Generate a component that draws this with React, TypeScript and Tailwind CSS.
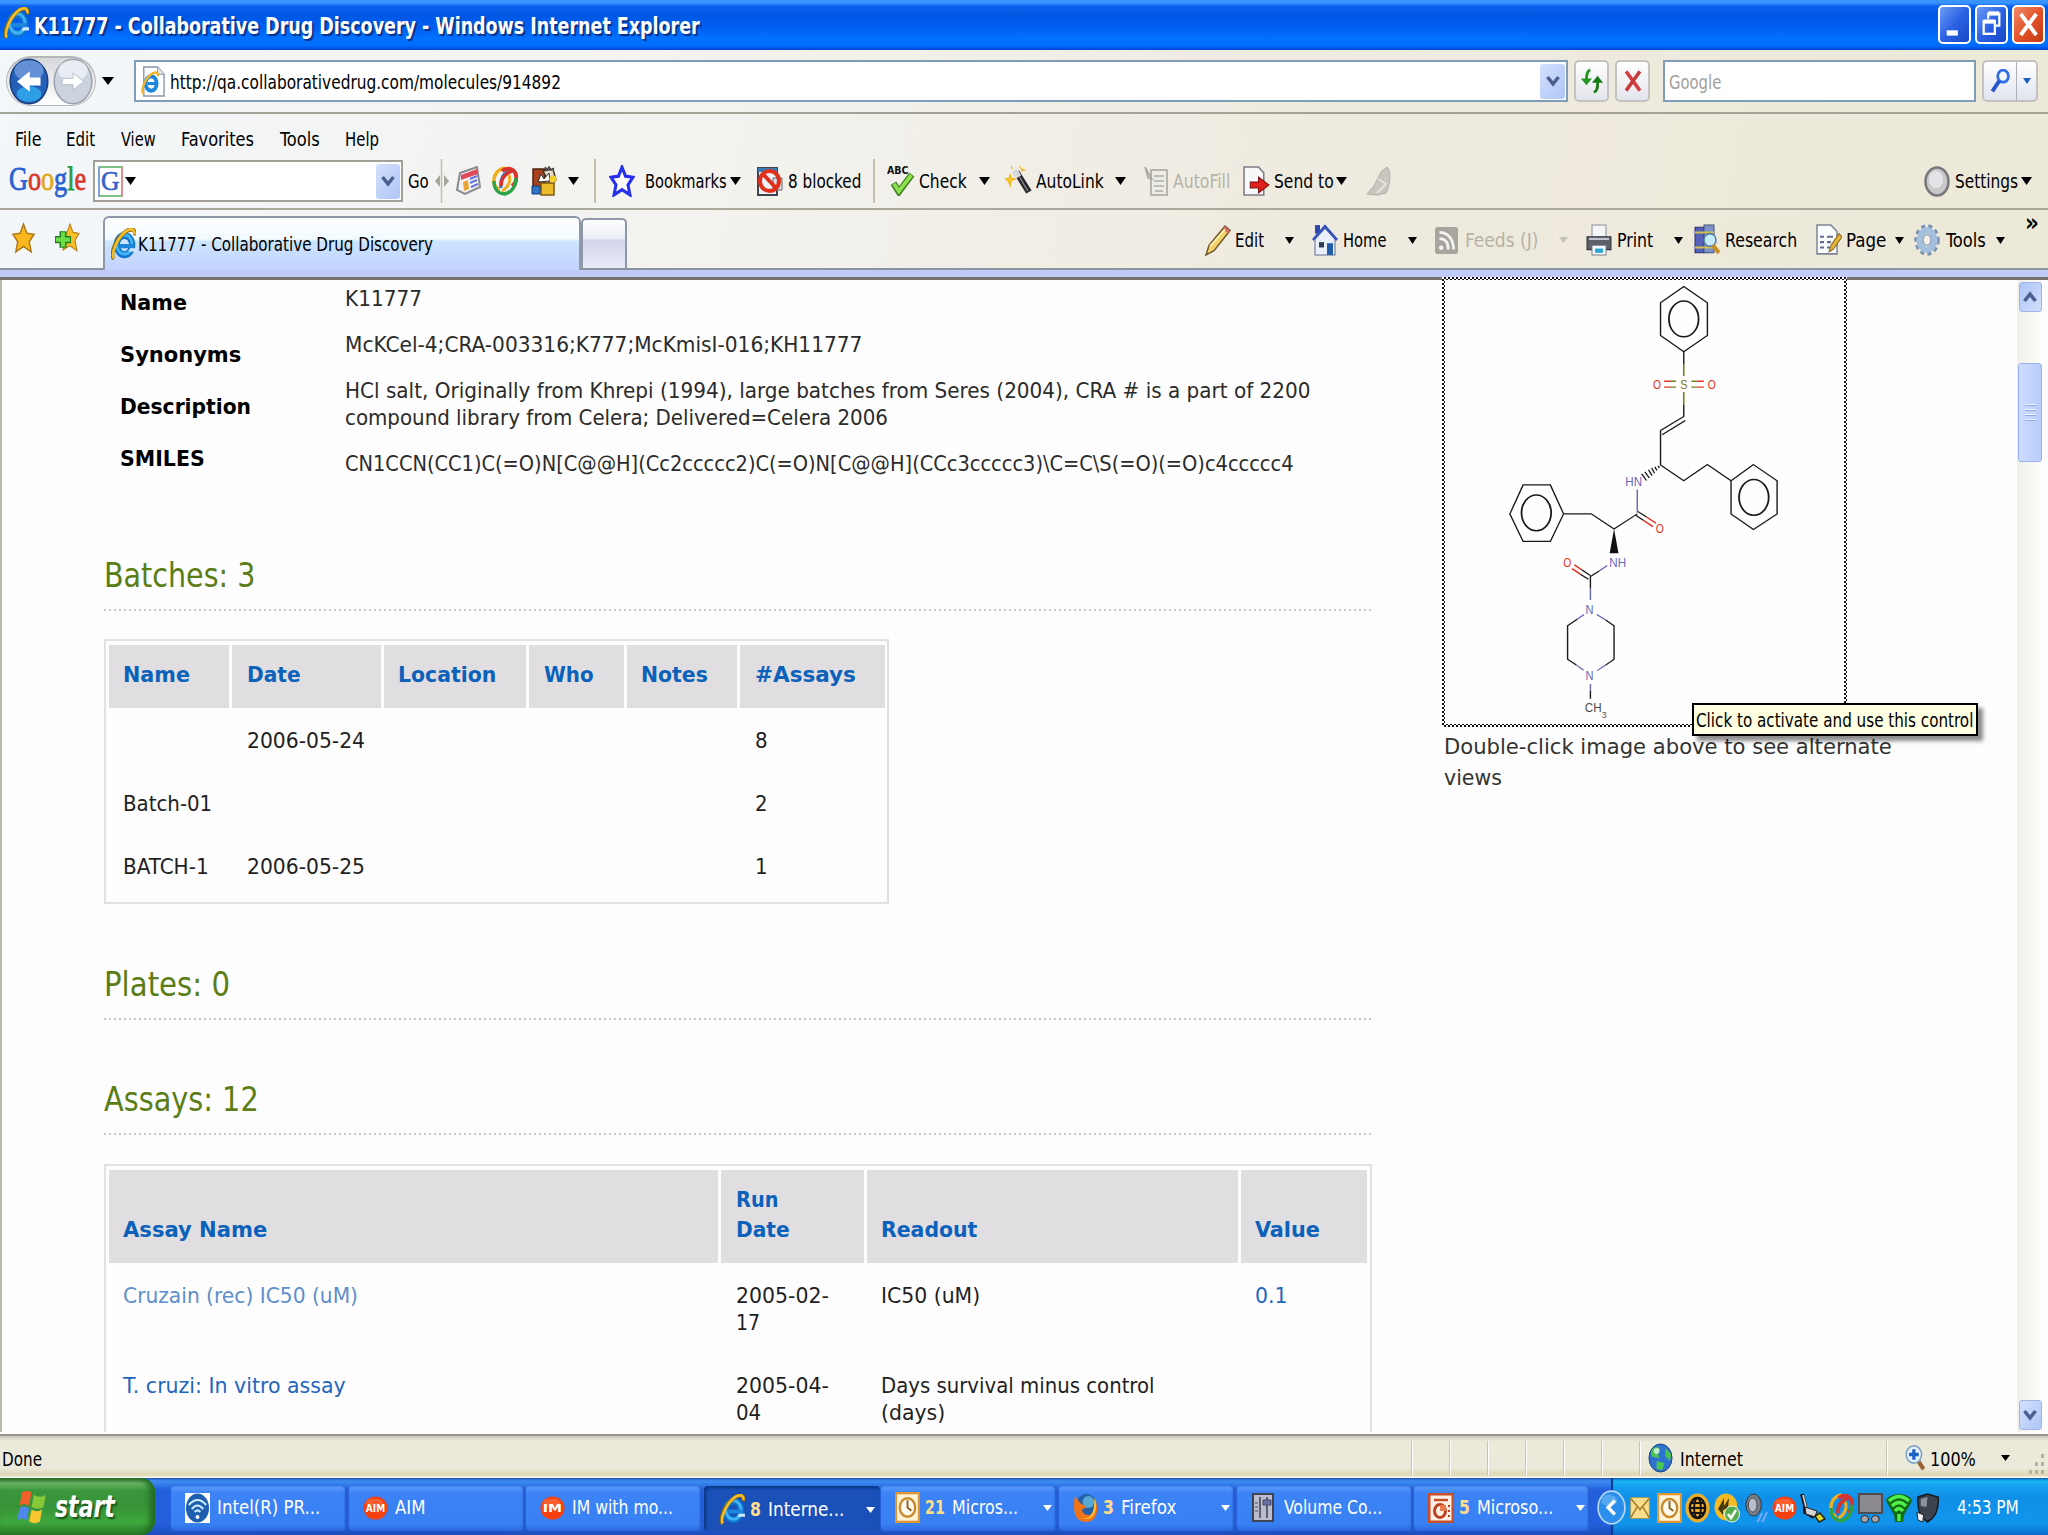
import React, { useLayoutEffect, useRef, useState } from 'react';

type Box = { className?: string; children?: React.ReactNode };

// Text squeezed horizontally so that it fills the width of its box.
const Fit: React.FC<Box> = ({ className = '', children }) => {
  const outer = useRef<HTMLSpanElement>(null);
  const inner = useRef<HTMLSpanElement>(null);
  const [scale, setScale] = useState(1);

  useLayoutEffect(() => {
    if (outer.current && inner.current) {
      setScale(outer.current.clientWidth / inner.current.offsetWidth);
    }
  }, [children]);

  return (
    <span ref={outer} className={`block shrink-0 whitespace-nowrap leading-none ${className}`}>
      <span ref={inner} className="inline-block origin-left" style={{ transform: `scaleX(${scale})` }}>
        {children}
      </span>
    </span>
  );
};

const Icon: React.FC<Box> = ({ className = 'h-[30px] w-[26px]', children }) => (
  <svg viewBox="0 0 26 30" preserveAspectRatio="none" fill="none" className={`block shrink-0 ${className}`}>
    {children}
  </svg>
);

const Caret: React.FC<Box> = ({ className = '' }) => (
  <svg viewBox="0 0 12 8" preserveAspectRatio="none" className={`block h-2 w-3 shrink-0 fill-current ${className}`}>
    <path d="M0 0H12L6 8Z" />
  </svg>
);

const IeLogo: React.FC<Box> = ({ className }) => (
  <Icon className={className}>
    <ellipse cx="14" cy="16" rx="8" ry="9" stroke="#1173c9" strokeWidth="6.500" />
    <ellipse cx="14" cy="15.500" rx="8" ry="9" stroke="#3fb3f3" strokeWidth="3" />
    <path d="M9 17H24" stroke="#1e86dc" strokeWidth="4" />
    <path d="M20 19H26V22H18Z" fill="#cfe6fa" />
    <path d="M3 29C-1 25 4 12 13 5C19 0 26 0 25 7" stroke="#8a6a12" strokeWidth="4" />
    <path d="M3 28.500C0 25 5 12 13 5C19 0 25 0 24.500 6" stroke="#f5bf2c" strokeWidth="2.600" />
  </Icon>
);

const PageIcon = () => (
  <Icon className="h-[31px] w-[24px]">
    <path d="M3 1H18L25 8V29H3Z" fill="#fff" stroke="#8a94a6" strokeWidth="1.500" />
    <path d="M18 1V8H25" fill="#dfe6f0" stroke="#8a94a6" />
    <ellipse cx="11" cy="17" rx="6" ry="7" stroke="#1c86dd" strokeWidth="4" />
    <path d="M7 17H18" stroke="#1c86dd" strokeWidth="3" />
    <path d="M3 27C-1 24 4 13 11 8C16 5 19 6 18 10" stroke="#f0b52a" strokeWidth="2.500" />
  </Icon>
);

const Star: React.FC<{ fill: string; stroke: string; className?: string; width?: number }> = ({ fill, stroke, className, width = 1.5 }) => (
  <Icon className={className}>
    <path d="M13 2L16.500 10.500L24 11.500L19 18.500L21 28L13 23L5 28L7 18.500L2 11.500L9.500 10.500Z" fill={fill} stroke={stroke} strokeWidth={width} />
  </Icon>
);

const Swirl: React.FC<Box> = ({ className }) => (
  <Icon className={className}>
    <path d="M13 2C5 3 1 10 2 17C3 21 5 23 8 23" stroke="#f0b01e" strokeWidth="3.500" />
    <path d="M19 5C11 6 8 13 9 22" stroke="#2c70c8" strokeWidth="3" />
    <path d="M10 5C15 1 22 2 24 9C25 14 23 18 20 20" stroke="#d8332a" strokeWidth="4" />
    <path d="M20 5C12 8 9 13 9 20" stroke="#d8332a" strokeWidth="3.500" />
    <path d="M17 9C19 14 17 21 10 25" stroke="#f0b01e" strokeWidth="3" />
    <path d="M24 12C24 21 19 27 12 28" stroke="#2ba345" strokeWidth="3.500" />
    <path d="M2 15C2 23 6 28 13 28" stroke="#2ba345" strokeWidth="3.500" />
  </Icon>
);

const Clock: React.FC<Box> = ({ className }) => (
  <Icon className={className}>
    <rect x="1" y="1" width="24" height="28" fill="#fff3d6" stroke="#e0952f" strokeWidth="2.500" />
    <ellipse cx="13" cy="15" rx="8" ry="9" fill="#fffaf0" stroke="#c98a2c" strokeWidth="2.500" />
    <path d="M13 8V15L17 18" stroke="#8c6420" strokeWidth="2" />
  </Icon>
);

const Badge: React.FC<{ label: string; className?: string }> = ({ label, className }) => (
  <Icon className={className}>
    <ellipse cx="13" cy="15" rx="12.500" ry="14.500" fill="#f8400e" />
    <ellipse cx="12" cy="9" rx="9" ry="6" fill="#ff7446" opacity=".6" />
    <text x="3" y="20" textLength="20" lengthAdjust="spacingAndGlyphs" fontSize="12" fontWeight="bold" fill="#fff">{label}</text>
  </Icon>
);

const Chevron: React.FC<Box> = ({ className = '' }) => (
  <div className={`flex shrink-0 items-center justify-center rounded-[3px] bg-linear-to-br from-[#d3e0fe] to-[#aec5f6] ${className}`}>
    <svg viewBox="0 0 14 12" className="block h-3 w-[14px]" fill="none">
      <path d="M1.500 2L7 9L12.500 2" stroke="#4a6190" strokeWidth="3.500" />
    </svg>
  </div>
);

const TitleBar = () => (
  <header className="flex h-[50px] items-center bg-[linear-gradient(#3a94ff_0,#3a94ff_3px,#0a63ee_6px,#0057e2_14px,#005ff2_28px,#0072ff_38px,#006cfb_46px,#0042cf_50px)] text-white">
    <IeLogo className="ml-[4px] h-[32px] w-[25px] -mt-1" />
    <Fit className="ml-[5px] w-[666px] pt-[2px] text-[23px] font-bold [text-shadow:2px_2px_1px_#0a2f86]">K11777 - Collaborative Drug Discovery - Windows Internet Explorer</Fit>
    <div className="mr-[3px] ml-auto flex gap-[4px] -mt-[2px]">
      {['min', 'restore', 'close'].map((kind) => (
        <div
          key={kind}
          className={`h-[39px] w-[33px] rounded-[5px] border-2 border-white ${
            kind === 'close'
              ? 'bg-linear-to-br from-[#f08a66] via-[#e4532a] to-[#c23a10]'
              : 'bg-linear-to-br from-[#6d9bf6] via-[#2b62e4] to-[#1747c4]'
          }`}
        >
          <Icon className="h-full w-full">
            {kind === 'min' && <rect x="6" y="20" width="10" height="4.500" fill="#fff" />}
            {kind === 'restore' && (
              <g stroke="#fff" strokeWidth="2">
                <path d="M10 10V6H20V16H17" />
                <path d="M10 5.500H20" strokeWidth="3.500" />
                <rect x="6" y="12" width="10" height="11" />
                <path d="M6 12.500H16" strokeWidth="3.500" />
              </g>
            )}
            {kind === 'close' && <path d="M6 6L20 24M20 6L6 24" stroke="#fff" strokeWidth="3.500" />}
          </Icon>
        </div>
      ))}
    </div>
  </header>
);

const AddressBar = () => (
  <div className="flex h-[64px] items-center border-b-2 border-[#a3a296]">
    <div className="ml-[6px] flex h-[50px] w-[90px] items-center justify-between rounded-full border border-[#b5b7ba] border-t-2 bg-linear-to-b from-[#d6d8da] to-white px-[2px]">
      <Icon className="h-[47px] w-[40px]">
        <ellipse cx="13" cy="15" rx="12.200" ry="14.200" fill="#2560b8" stroke="#1b3d7c" />
        <ellipse cx="13" cy="8" rx="9.500" ry="6.500" fill="#7fa5e2" opacity=".7" />
        <ellipse cx="13" cy="23" rx="8" ry="5" fill="#31b4f4" opacity=".75" />
        <path d="M6 15L13 9.500V13H20V17H13V20.500Z" fill="#fff" stroke="#fff" />
      </Icon>
      <Icon className="h-[47px] w-[40px]">
        <ellipse cx="13" cy="15" rx="12.200" ry="14.200" fill="#cbd4de" stroke="#9ba3ac" />
        <ellipse cx="13" cy="8" rx="9.500" ry="6.500" fill="#eef2f6" opacity=".8" />
        <path d="M20 15L13 9.500V13H6V17H13V20.500Z" fill="#fff" stroke="#b4bcc6" strokeWidth=".6" />
      </Icon>
    </div>
    <Caret className="ml-[6px]" />
    <div className="ml-[20px] flex h-[42px] w-[1434px] items-center border-2 border-[#7f9db9] bg-white pl-[5px]">
      <PageIcon />
      <Fit className="ml-[5px] w-[391px] pt-[2px] text-[19px]">http://qa.collaborativedrug.com/molecules/914892</Fit>
      <Chevron className="mr-px ml-auto h-[35px] w-[25px]" />
    </div>
    <div className="ml-[6px] flex h-[42px] w-[35px] items-center justify-center rounded-[5px] border-2 border-[#c3c2c0] bg-linear-to-b from-white to-[#e4e4ec]">
      <Icon className="h-[26px] w-[24px]">
        <path d="M11 2C7 4 7 9 7 14" stroke="#23961f" strokeWidth="3" />
        <path d="M1 12H13L7 20Z" fill="#23961f" />
        <path d="M15 28C20 26 19 20 19 15" stroke="#187a16" strokeWidth="3" />
        <path d="M13 17H25L19 9Z" fill="#187a16" />
      </Icon>
    </div>
    <div className="ml-[6px] flex h-[42px] w-[35px] items-center justify-center rounded-[5px] border-2 border-[#c3c2c0] bg-linear-to-b from-white to-[#e4e4ec]">
      <Icon className="h-[22px] w-[18px]">
        <path d="M3 2L23 28" stroke="#d13f42" strokeWidth="5" />
        <path d="M23 2L3 28" stroke="#c53a3c" strokeWidth="5" />
      </Icon>
    </div>
    <div className="ml-[13px] flex h-[42px] w-[313px] items-center border-2 border-[#7f9db9] bg-white pl-[4px]">
      <Fit className="w-[52px] pt-[2px] text-[19px] text-[#a3a09a]">Google</Fit>
    </div>
    <div className="ml-[6px] flex h-[42px] w-[56px] items-center rounded-[5px] border-2 border-[#c3c2c0] bg-linear-to-b from-white to-[#e1e4f0]">
      <div className="flex h-full w-[33px] items-center justify-center border-r border-[#b0b0b4]">
        <Icon className="h-[24px] w-[20px]">
          <ellipse cx="17" cy="9" rx="7" ry="7.500" stroke="#2d6be8" strokeWidth="3.500" />
          <path d="M12 15L3 28" stroke="#2358cf" strokeWidth="5" />
        </Icon>
      </div>
      <Caret className="ml-[6px] h-[6px] w-[8px] text-[#1a5fc4]" />
    </div>
  </div>
);

const MenuBar = () => (
  <nav className="flex h-[50px] items-center pl-[15px] text-[19px]">
    <Fit className="w-[26px]">File</Fit>
    <Fit className="ml-[25px] w-[29px]">Edit</Fit>
    <Fit className="ml-[26px] w-[35px]">View</Fit>
    <Fit className="ml-[25px] w-[73px]">Favorites</Fit>
    <Fit className="ml-[26px] w-[40px]">Tools</Fit>
    <Fit className="ml-[25px] w-[34px]">Help</Fit>
  </nav>
);

const GoogleBar = () => (
  <div className="flex h-[46px] items-center border-b-2 border-[#a9a89b] pb-[10px] text-[19px]">
    <Fit className="ml-[9px] w-[77px] font-['Liberation_Serif',serif] text-[33px] -mt-[4px] [-webkit-text-stroke:0.8px]">
      <span className="text-[#2a62d0]">G</span>
      <span className="text-[#d8392a]">o</span>
      <span className="text-[#e0a91c]">o</span>
      <span className="text-[#2a62d0]">g</span>
      <span className="text-[#2f9a3d]">l</span>
      <span className="text-[#d8392a]">e</span>
    </Fit>
    <div className="ml-[7px] flex h-[42px] w-[310px] shrink-0 items-center border-2 border-[#a19f98] bg-white pl-[3px]">
      <div className="flex h-[31px] w-[25px] items-center justify-center border-2 border-t-[#7fc088] border-r-[#e58a86] border-b-[#7fc088] border-l-[#7fa0e0] font-['Liberation_Serif',serif] text-[27px] leading-none text-[#3562c8] [-webkit-text-stroke:0.6px]">
        <Fit className="w-[19px]">G</Fit>
      </div>
      <Caret className="ml-[2px] h-[8px] w-[11px]" />
      <Chevron className="mr-px ml-auto h-[35px] w-[24px]" />
    </div>
    <Fit className="ml-[5px] w-[21px]">Go</Fit>
    <svg viewBox="0 0 14 44" className="ml-[6px] block h-[44px] w-[14px] shrink-0">
      <path d="M0 22L5 16V28ZM14 22L9 16V28Z" fill="#a5a59c" />
      <path d="M6.500 0V44" stroke="#c0bfae" strokeWidth="1.500" />
    </svg>
    <Icon className="ml-[6px] h-[30px] w-[26px]">
      <path d="M5 7L22 1L25 21L10 28L2 24Z" fill="#f3f3f6" stroke="#8a8a92" strokeWidth="2" />
      <path d="M6 9L22 3L23 8L6 14Z" fill="#e04a58" />
      <path d="M8 16L13 14L14 23L9 25Z" fill="#e9a533" />
      <path d="M15 13L22 10M15 17L22 14M16 21L23 18" stroke="#6672dd" strokeWidth="2" />
    </Icon>
    <Swirl className="ml-[11px] h-[30px] w-[26px]" />
    <Icon className="ml-[13px] h-[30px] w-[26px]">
      <path d="M2 3H14V22H2Z" fill="#a8411d" stroke="#4a2515" strokeWidth="1.500" />
      <path d="M12 5L22 3L25 14L20 20Z" fill="#e5d9c8" stroke="#3b352c" strokeWidth="1.500" />
      <path d="M7 16L10 8L13 13L18 7L19 15Z" fill="#fff" stroke="#333" />
      <path d="M14 1L16 4L18 1L20 4L23 2" stroke="#444" strokeWidth="1.500" />
      <rect x="10" y="17" width="13" height="12" fill="#eebb2d" stroke="#7a5a12" strokeWidth="1.500" />
      <path d="M1 20H9V28H1Z" fill="#2f74c9" stroke="#173f74" />
      <circle cx="22" cy="13" r="3.500" fill="#f4cf2f" />
    </Icon>
    <Caret className="ml-[11px] h-[8px] w-[11px]" />
    <div className="ml-[15px] h-[44px] w-[2px] shrink-0 bg-[#c3c1ac]" />
    <Star className="ml-[13px] h-[32px] w-[26px]" fill="#fdfdff" stroke="#2430ee" width={3} />
    <Fit className="ml-[10px] w-[82px]">Bookmarks</Fit>
    <Caret className="ml-[3px] h-[8px] w-[11px]" />
    <Icon className="ml-[16px] h-[30px] w-[26px]">
      <path d="M1 2H20V29H1Z" fill="#eef2f6" stroke="#3b4650" strokeWidth="2" />
      <path d="M1 2H20V6H1Z" fill="#3b7bb5" />
      <path d="M16 12H25V24H16Z" fill="#d9e0e8" stroke="#5e6a72" />
      <ellipse cx="12.500" cy="15" rx="9.500" ry="10" stroke="#e0301c" strokeWidth="4" />
      <path d="M6 8L19 22" stroke="#e0301c" strokeWidth="4" />
    </Icon>
    <Fit className="ml-[5px] w-[73px]">8 blocked</Fit>
    <div className="ml-[12px] h-[44px] w-[2px] shrink-0 bg-[#c3c1ac]" />
    <Icon className="ml-[12px] -mt-[3px] h-[32px] w-[28px]">
      <text x="0" y="9" textLength="20" lengthAdjust="spacingAndGlyphs" fontSize="10" fontWeight="bold" fill="#111">ABC</text>
      <path d="M6 18L11 26L23 10" stroke="#3d7d22" strokeWidth="6" />
      <path d="M6.500 18.500L11 25.500L22.500 10.500" stroke="#8fe04f" strokeWidth="3.500" />
    </Icon>
    <Fit className="ml-[4px] w-[48px]">Check</Fit>
    <Caret className="ml-[12px] h-[8px] w-[11px]" />
    <Icon className="ml-[15px] h-[30px] w-[27px]">
      <path d="M11 6L23 26" stroke="#26262a" strokeWidth="6" />
      <path d="M9 4L13 11" stroke="#d9d9dc" strokeWidth="6" />
      <path d="M14 11L22 25" stroke="#85858c" strokeWidth="1.500" />
      <path d="M5 8L6 12L10 13L6 15L5 20L3 15L0 13L4 12ZM14 0L16 3L19 4L16 5M6 0L7 3" fill="#f7c928" stroke="#eab71e" />
    </Icon>
    <Fit className="ml-[4px] w-[68px]">AutoLink</Fit>
    <Caret className="ml-[11px] h-[8px] w-[11px]" />
    <Icon className="ml-[17px] h-[30px] w-[26px]">
      <path d="M8 4H24V29H8Z" fill="#ecebe6" stroke="#b5b4ad" strokeWidth="2" />
      <path d="M11 10H21M11 15H21M11 20H21M12 25H20" stroke="#bdbcb5" strokeWidth="2" />
      <path d="M2 1L9 13L5 12Z" fill="#c9c8c2" stroke="#aaa9a2" strokeWidth="1.500" />
    </Icon>
    <Fit className="ml-[4px] w-[57px] text-[#b5b3a8]">AutoFill</Fit>
    <Icon className="ml-[13px] h-[30px] w-[27px]">
      <path d="M1 1H15L20 7V29H1Z" fill="#f8f8fa" stroke="#7c7c86" strokeWidth="1.500" />
      <path d="M7 16H15V11L25 19L15 27V22H7Z" fill="#e01e1a" stroke="#7c1311" />
    </Icon>
    <Fit className="ml-[4px] w-[60px]">Send to</Fit>
    <Caret className="ml-[2px] h-[8px] w-[11px]" />
    <Icon className="ml-[19px] h-[30px] w-[26px]">
      <path d="M21 1C25 4 25 17 20 27L11 29L1 28L8 20L15 6Z" fill="#c8c6be" stroke="#b0aea6" />
      <path d="M12 13L20 18L11 27" stroke="#e5e3dc" strokeWidth="2" />
    </Icon>
    <Icon className="ml-auto h-[31px] w-[26px]">
      <ellipse cx="13" cy="15" rx="11.500" ry="13.500" fill="#c9c9cb" stroke="#77777c" strokeWidth="2.500" />
      <ellipse cx="12" cy="13" rx="7" ry="8.500" fill="#e3e3e5" />
    </Icon>
    <Fit className="ml-[5px] w-[63px]">Settings</Fit>
    <Caret className="mr-[16px] ml-[3px] h-[8px] w-[11px]" />
  </div>
);

const CommandBar = () => (
  <div className="flex h-[60px] items-end border-b-2 border-[#8d939c] text-[19px]">
    <div className="flex h-full w-[103px] items-center gap-[18px] pb-[3px] pl-[11px]">
      <Star className="h-[32px] w-[25px]" fill="#f8b820" stroke="#b07a14" />
      <Icon className="h-[31px] w-[26px]">
        <path d="M16 2L19 10L25 11L21 18L23 28L16 23L9 27L11 18L7 11L13 10Z" fill="#f8bd28" stroke="#b07a14" />
        <path d="M9 9V25M1 17H17" stroke="#20801b" strokeWidth="7" />
        <path d="M9 10V24M2 17H16" stroke="#6bdc45" strokeWidth="4" />
      </Icon>
    </div>
    <div className="-mb-[2px] flex h-[54px] w-[478px] items-center rounded-t-[6px] border-2 border-b-0 border-[#8f98a8] bg-[linear-gradient(#ffffff,#f2fafe_40%,#cbe5fe_45%,#c3d3ff)] pl-[6px]">
      <IeLogo className="h-[32px] w-[25px]" />
      <Fit className="ml-[2px] w-[295px] pt-px">K11777 - Collaborative Drug Discovery</Fit>
    </div>
    <div className="h-[50px] w-[46px] rounded-t-[5px] border-2 border-b-0 border-[#8f98a8] bg-[linear-gradient(#ffffff,#eceef8_38%,#d3d6ea_42%,#e9ebfa)]" />
    <div className="flex h-full flex-1 items-center pt-[2px]">
      <Icon className="ml-[578px] h-[32px] w-[26px]">
        <path d="M1 29L4 20L20 2L25 6L9 25Z" fill="#f3d16c" stroke="#6f5a28" strokeWidth="1.500" />
        <path d="M20 2L25 6L23 9L18 5Z" fill="#d96b6b" />
        <path d="M5 21L20 5" stroke="#fff2b8" strokeWidth="1.500" />
      </Icon>
      <Fit className="ml-[4px] w-[29px]">Edit</Fit>
      <Caret className="ml-[21px] h-[7px] w-[9px]" />
      <Icon className="ml-[18px] h-[32px] w-[26px]">
        <path d="M3 1H8V9H3Z" fill="#2c48ad" />
        <path d="M3 14L13 4L23 14V29H3Z" fill="#e9eff8" stroke="#5d6f96" />
        <path d="M1 15L13 2L25 15" stroke="#3453bd" strokeWidth="2.500" />
        <path d="M15 18H21V29H15Z" fill="#1f5fa8" />
        <path d="M7 17H12V22H7Z" fill="#2e3c56" />
      </Icon>
      <Fit className="ml-[5px] w-[44px]">Home</Fit>
      <Caret className="ml-[21px] h-[7px] w-[9px]" />
      <Icon className="ml-[18px] h-[27px] w-[23px]">
        <rect width="26" height="30" rx="3" fill="#a7a59e" />
        <path d="M5 13C12 13 15 18 15 25M5 6C16 6 21 15 21 25" stroke="#f5f4f0" strokeWidth="3" />
        <circle cx="7" cy="23" r="2.500" fill="#f5f4f0" />
      </Icon>
      <Fit className="ml-[7px] w-[73px] text-[#b5b3a8]">Feeds (J)</Fit>
      <Caret className="ml-[21px] h-[6px] w-[9px] text-[#c5c2b5]" />
      <Icon className="ml-[18px] h-[32px] w-[26px]">
        <path d="M6 1H20V13H6Z" fill="#f3f5f8" stroke="#8a8f98" />
        <path d="M1 12H25V24H1Z" fill="#5c6068" stroke="#2f3238" />
        <path d="M3 14H23" stroke="#c0c4cc" strokeWidth="2" />
        <path d="M6 20H20V29H6Z" fill="#f5fafd" stroke="#777c84" />
        <path d="M9 23H17V27H9Z" fill="#2aa7d8" />
      </Icon>
      <Fit className="ml-[5px] w-[36px]">Print</Fit>
      <Caret className="ml-[21px] h-[7px] w-[9px]" />
      <Icon className="ml-[11px] h-[32px] w-[26px]">
        <path d="M1 3H10V27H1Z" fill="#5560b8" stroke="#2d3570" />
        <path d="M10 1H20V27H10Z" fill="#7f93c9" stroke="#39517a" />
        <path d="M1 8H20M1 22H20" stroke="#d4c04f" strokeWidth="2" />
        <circle cx="16" cy="15" r="6" fill="#c4ecfb" stroke="#56829c" strokeWidth="1.500" />
        <path d="M19 20L25 27" stroke="#c98f1e" strokeWidth="4" />
      </Icon>
      <Fit className="ml-[5px] w-[72px]">Research</Fit>
      <Icon className="ml-[19px] h-[32px] w-[26px]">
        <path d="M1 1H15L21 7V28H1Z" fill="#fbfcfe" stroke="#7d8694" strokeWidth="1.500" />
        <path d="M4 12H8M11 12H17M4 17H8M11 17H15M4 22H8M11 22H14" stroke="#606c90" strokeWidth="2" />
        <path d="M13 26L15 20L23 9L26 12L17 24Z" fill="#e9b43a" stroke="#8a6a22" />
      </Icon>
      <Fit className="ml-[4px] w-[40px]">Page</Fit>
      <Caret className="ml-[9px] h-[7px] w-[9px]" />
      <Icon className="ml-[10px] h-[32px] w-[26px]">
        <ellipse cx="13" cy="15" rx="11" ry="13" stroke="#7c94b4" strokeWidth="3.500" strokeDasharray="4 3.200" />
        <ellipse cx="13" cy="15" rx="7.500" ry="9" stroke="#a5c0de" strokeWidth="6" />
        <ellipse cx="13" cy="15" rx="4" ry="5" stroke="#6f88a8" fill="#f4f1e8" />
      </Icon>
      <Fit className="ml-[6px] w-[40px]">Tools</Fit>
      <Caret className="ml-[10px] h-[7px] w-[9px]" />
      <Fit className="-mt-[34px] ml-[20px] w-[14px] text-[24px] font-bold">»</Fit>
    </div>
  </div>
);

// Atom captions, centred on (x, y).
const Atom: React.FC<{ x: number; y: number; w: number; color: string; label: string; size?: number }> = ({ x, y, w, color, label, size = 38 }) => (
  <text x={x - w / 2} y={y + size * 0.34} textLength={w} lengthAdjust="spacingAndGlyphs" fontSize={size} fill={color}>{label}</text>
);

const Molecule = () => {
  const red = '#e8321e';
  const blue = '#6468b4';
  const olive = '#7c7c1e';
  return (
    <svg viewBox="65 29 996 1289" preserveAspectRatio="none" className="block h-full w-full font-['Liberation_Sans',sans-serif]" fill="none">
      <g stroke="#1a1a1a" strokeWidth="3.500">
        <path d="M661 48L720 95V190L661 237L603 190V95ZM661 237V275M661 390V425L603 466M665 437L607 478M603 466V566L661 612L720 565L779 612" />
        <path d="M835 565L894 612V708L835 753L779 708V612ZM361 708L328 788H260L227 708L260 624H328ZM361 708H430L487 752L545 708" />
        <path d="M545 700L568 717M541 712L561 727M428 887L407 871M423 898L403 883M450 874L428 890V925M395 1014L371 1033V1130L393 1147M466 1016L487 1033V1130L466 1147M428 1222V1245" />
        <path d="M597 568L600 575M589 571L594 582M581 575L588 590M573 580L582 597M564 586L575 604M556 592L568 611" />
        <ellipse cx="661" cy="142" rx="37" ry="52" strokeWidth="4.500" />
        <ellipse cx="836" cy="660" rx="37" ry="52" strokeWidth="4.500" />
        <ellipse cx="293" cy="705" rx="37" ry="52" strokeWidth="4.500" />
      </g>
      <path d="M487 752L476 822H498Z" fill="#111" />
      <path d="M661 275V308M661 354V390M627 323H642M627 340H642M680 323H696M680 340H696" stroke={olive} strokeWidth="4" />
      <path d="M612 323H627M612 340H627M696 323H711M696 340H711M568 717L592 735M561 727L584 745M407 871L388 856M403 883L382 867" stroke={red} strokeWidth="4" />
      <path d="M545 637V705M470 858L450 874M428 925V958M412 1000L395 1014M444 1000L466 1016M393 1147L411 1162M466 1147L445 1163M428 1202V1222" stroke={blue} strokeWidth="3.500" />
      <Atom x={594} y={334} w={20} color={red} label="O" />
      <Atom x={661} y={334} w={18} color={olive} label="S" />
      <Atom x={731} y={334} w={20} color={red} label="O" />
      <Atom x={536} y={614} w={42} color={blue} label="HN" />
      <Atom x={601} y={752} w={20} color={red} label="O" />
      <Atom x={370} y={848} w={20} color={red} label="O" />
      <Atom x={496} y={848} w={42} color={blue} label="NH" />
      <Atom x={426} y={987} w={20} color={blue} label="N" />
      <Atom x={426} y={1177} w={20} color={blue} label="N" />
      <Atom x={435} y={1271} w={42} color="#4a4a4a" label="CH" />
      <Atom x={462} y={1291} w={12} color="#4a4a4a" label="3" size={26} />
    </svg>
  );
};

const Heading: React.FC<Box> = ({ className = '', children }) => (
  <>
    <h2 className={`flex h-[50px] items-center text-[33px] text-[#5a7d16] ${className}`}>{children}</h2>
    <div className="mt-[9px] h-[2px] w-[1269px] bg-[repeating-linear-gradient(to_right,#c6c6ca_0_2px,transparent_2px_5px)]" />
  </>
);

const Th: React.FC<Box> = ({ children }) => (
  <div className="flex flex-col justify-end bg-[#e0dee1] pb-[22px] pl-[14px] text-[#0c62ba]">{children}</div>
);

const Details = () => (
  <section className="flex h-[270px] pl-[16px] text-[22px]">
    <div className="flex w-[225px] flex-col gap-7 pt-[12px] font-bold text-black">
      <Fit className="h-6 w-[67px]">Name</Fit>
      <Fit className="h-6 w-[121px]">Synonyms</Fit>
      <Fit className="h-6 w-[131px]">Description</Fit>
      <Fit className="h-6 w-[85px]">SMILES</Fit>
    </div>
    <div className="flex flex-col pt-[8px] text-[#2b2b2b]">
      <Fit className="h-6 w-[77px]">K11777</Fit>
      <Fit className="mt-[22px] h-6 w-[517px]">McKCel-4;CRA-003316;K777;McKmisI-016;KH11777</Fit>
      <Fit className="mt-[22px] h-6 w-[965px]">HCl salt, Originally from Khrepi (1994), large batches from Seres (2004), CRA # is a part of 2200</Fit>
      <Fit className="mt-[3px] h-6 w-[543px]">compound library from Celera; Delivered=Celera 2006</Fit>
      <Fit className="mt-[22px] h-6 w-[949px]">{'CN1CCN(CC1)C(=O)N[C@@H](Cc2ccccc2)C(=O)N[C@@H](CCc3ccccc3)\\C=C\\S(=O)(=O)c4ccccc4'}</Fit>
    </div>
  </section>
);

const batches = [
  { name: '', width: '', date: '2006-05-24', assays: '8' },
  { name: 'Batch-01', width: 'w-[89px]', date: '', assays: '2' },
  { name: 'BATCH-1', width: 'w-[86px]', date: '2006-05-25', assays: '1' },
];

const BatchesTable = () => (
  <div className="mt-[28px] h-[265px] w-[785px] border-2 border-[#e1e0e4] px-[3px] pt-[4px] text-[22px]">
    <div className="grid h-[63px] grid-cols-[120px_149px_142px_95px_110px_145px] gap-[3px] font-bold">
      <Th><Fit className="w-[67px]">Name</Fit></Th>
      <Th><Fit className="ml-px w-[54px]">Date</Fit></Th>
      <Th><Fit className="w-[98px]">Location</Fit></Th>
      <Th><Fit className="ml-px w-[50px]">Who</Fit></Th>
      <Th><Fit className="w-[67px]">Notes</Fit></Th>
      <Th><Fit className="ml-px w-[101px]">#Assays</Fit></Th>
    </div>
    {batches.map((b) => (
      <div key={b.assays} className="grid h-[63px] grid-cols-[120px_149px_142px_95px_110px_145px] items-center gap-[3px] pt-[3px] text-[#1f1f1f]">
        <div className="pl-[14px]">{b.name && <Fit className={b.width}>{b.name}</Fit>}</div>
        <div className="pl-[15px]">{b.date && <Fit className="w-[118px]">{b.date}</Fit>}</div>
        <div className="col-start-6 pl-[15px]"><Fit className="w-[13px]">{b.assays}</Fit></div>
      </div>
    ))}
  </div>
);

const AssaysTable = () => (
  <div className="mt-[29px] h-[400px] w-[1268px] border-2 border-[#e1e0e4] px-[3px] pt-[4px] text-[22px]">
    <div className="grid h-[93px] grid-cols-[609px_143px_371px_126px] gap-[3px] font-bold">
      <Th><Fit className="w-[144px]">Assay Name</Fit></Th>
      <Th>
        <Fit className="mb-[8px] ml-px w-[42px]">Run</Fit>
        <Fit className="ml-px w-[54px]">Date</Fit>
      </Th>
      <Th><Fit className="w-[96px]">Readout</Fit></Th>
      <Th><Fit className="w-[65px]">Value</Fit></Th>
    </div>
    <div className="grid h-[90px] grid-cols-[609px_143px_371px_126px] gap-[3px] pt-[22px] text-[#1f1f1f]">
      <Fit className="ml-[14px] w-[235px] text-[#5f8fca]">Cruzain (rec) IC50 (uM)</Fit>
      <div className="flex flex-col gap-[5px] pl-[15px]">
        <Fit className="w-[93px]">2005-02-</Fit>
        <Fit className="w-[24px]">17</Fit>
      </div>
      <Fit className="ml-[14px] w-[99px]">IC50 (uM)</Fit>
      <Fit className="ml-[14px] w-[32px] text-[#1f66bd]">0.1</Fit>
    </div>
    <div className="grid h-[90px] grid-cols-[609px_143px_371px_126px] gap-[3px] pt-[22px] text-[#1f1f1f]">
      <Fit className="ml-[14px] w-[223px] text-[#1f66bd]">T. cruzi: In vitro assay</Fit>
      <div className="flex flex-col gap-[5px] pl-[15px]">
        <Fit className="w-[93px]">2005-04-</Fit>
        <Fit className="w-[25px]">04</Fit>
      </div>
      <div className="flex flex-col gap-[5px] pl-[14px]">
        <Fit className="w-[274px]">Days survival minus control</Fit>
        <Fit className="w-[64px]">(days)</Fit>
      </div>
    </div>
  </div>
);

const Structure = () => (
  <aside className="ml-[69px] w-[560px] shrink-0 text-[#333]">
    <div className="relative -mt-[3px] h-[450px] w-[405px] bg-[repeating-conic-gradient(#111_0_25%,#fff_0_50%)] bg-[length:4px_4px] p-[3px]">
      <div className="h-full bg-[#fefefe]">
        <Molecule />
      </div>
      <div className="absolute top-[426px] left-[250px] z-10 flex h-[33px] w-[286px] items-center border-2 border-black bg-[#ffffe1] pt-px pl-[2px] text-[19px] text-black shadow-[5px_5px_4px_rgba(0,0,0,0.45)]">
        <Fit className="w-[277px]">Click to activate and use this control</Fit>
      </div>
    </div>
    <div className="flex flex-col gap-[9px] pt-[9px] pl-[2px] text-[22px]">
      <Fit className="w-[448px]">Double-click image above to see alternate</Fit>
      <Fit className="w-[58px]">views</Fit>
    </div>
  </aside>
);

const ScrollBar = () => (
  <div className="ml-auto flex w-[26px] shrink-0 flex-col items-center bg-linear-to-r from-[#f1f0ea] to-[#fdfdfb] pt-[2px] pb-[2px]">
    <Chevron className="h-[30px] w-[23px] rotate-180 border border-[#9db6e8]" />
    <div className="mt-[51px] flex h-[99px] w-[24px] flex-col items-center justify-center gap-[3px] rounded-[3px] border border-[#98b2ea] bg-linear-to-r from-[#cddcff] to-[#b9ccfa]">
      {[0, 1, 2, 3].map((i) => (
        <div key={i} className="h-[2px] w-[11px] border-b border-[#8fabe6] bg-[#eef4fe]" />
      ))}
    </div>
    <Chevron className="mt-auto h-[30px] w-[23px] border border-[#9db6e8]" />
  </div>
);

const StatusBar = () => (
  <div className="flex h-[42px] items-center bg-[linear-gradient(#c9c7ba,#ecead9_5px,#ebe9da_32px,#ddd6b5_39px,#fdfdf8)] pt-[4px] text-[19px]">
    <Fit className="ml-[2px] w-[40px]">Done</Fit>
    <div className="-mt-[2px] ml-[1369px] flex h-[34px] gap-[36px]">
      {[0, 1, 2, 3, 4, 5, 6].map((i) => (
        <div key={i} className="h-full w-[2px] border-r border-white bg-[#c6c3b2]" />
      ))}
    </div>
    <Icon className="ml-[7px] -mt-[2px] h-[30px] w-[25px]">
      <ellipse cx="13" cy="15" rx="12" ry="14" fill="#2e72cf" stroke="#1c4280" />
      <path d="M6 5C12 2 14 7 10 10L12 15L5 14C2 11 3 7 6 5ZM9 18L17 20L15 27L9 26ZM18 5L24 11L23 18L18 13Z" fill="#4cc452" />
      <ellipse cx="9" cy="8" rx="3" ry="3" fill="#dff6e4" opacity=".8" />
    </Icon>
    <Fit className="ml-[7px] w-[63px]">Internet</Fit>
    <div className="-mt-[2px] ml-[143px] h-[34px] w-[2px] border-r border-white bg-[#c6c3b2]" />
    <Icon className="ml-[17px] -mt-[3px] h-[26px] w-[21px]">
      <path d="M16 18L23 28" stroke="#9a6132" strokeWidth="5" />
      <ellipse cx="11" cy="11" rx="9.500" ry="10" fill="#e6f3fd" stroke="#7ea2c6" strokeWidth="2" />
      <path d="M11 5V17M5 11H17" stroke="#1862c4" strokeWidth="4" />
    </Icon>
    <Fit className="ml-[4px] w-[46px]">100%</Fit>
    <Caret className="-mt-[2px] ml-[25px] h-[6px] w-[9px]" />
    <svg viewBox="0 0 18 20" className="mt-[10px] ml-[18px] block h-5 w-[18px] shrink-0" fill="#b5b2a0">
      <path d="M13 0h3v4h-3zM13 8h3v4h-3zM13 16h3v4h-3zM7 8h3v4h-3zM7 16h3v4h-3zM1 16h3v4h-3z" />
    </svg>
  </div>
);

type TaskProps = { icon: React.ReactNode; count?: string; countWidth?: string; label: string; width: string; menu?: boolean; active?: boolean };

const Task: React.FC<TaskProps> = ({ icon, count, countWidth = 'w-[11px]', label, width, menu, active }) => (
  <div
    className={`flex h-[45px] w-[176px] shrink-0 items-center rounded-[4px] pl-[14px] ${
      active
        ? 'bg-[#1a50b8] pt-[2px] shadow-[inset_2px_2px_3px_#0c3684]'
        : 'bg-[linear-gradient(#5b9cfb,#3c83f5_7px,#3880f3_38px,#2c6be0)] pb-[2px] shadow-[inset_-2px_0_2px_#2459c8]'
    }`}
  >
    {icon}
    {count && <Fit className={`ml-[5px] font-bold text-[#ffdc8c] ${countWidth}`}>{count}</Fit>}
    <Fit className={`ml-[7px] ${width}`}>{label}</Fit>
    {menu && <Caret className="mr-[5px] ml-auto h-[6px] w-[9px]" />}
  </div>
);

const TaskBar = () => (
  <footer className="flex h-[57px] bg-[linear-gradient(#1b55b4,#3f8cf0_3px,#2f7ae8_7px,#2260dc_12px,#245fdc_46px,#1c4cba_57px)] text-[19px] text-white">
    <div className="flex w-[155px] shrink-0 items-center rounded-r-[14px] bg-[linear-gradient(#2c6c2c,#6cb468_5px,#3a963a_13px,#389438_30px,#3fa83d_44px,#2b7c2b_57px)] pl-[16px] shadow-[inset_-5px_0_6px_#1f6a22]">
      <Icon className="h-[36px] w-[31px]">
        <path d="M5 3Q9 0 13 3L11 14Q7 11 3 14Z" fill="#f0602a" />
        <path d="M15 5Q20 8 25 5L23 15Q18 18 13 15Z" fill="#86c83a" />
        <path d="M3 16Q7 13 11 16L9 26Q5 23 1 26Z" fill="#4f86ec" />
        <path d="M13 17Q18 20 22 17L20 27Q16 30 11 27Z" fill="#f6c530" />
      </Icon>
      <Fit className="ml-[8px] w-[60px] text-[31px] font-bold italic [text-shadow:2px_2px_2px_#1d4f1d]">start</Fit>
    </div>
    <div className="ml-[16px] flex w-[1427px] shrink-0 items-center gap-[1.6px] pt-[4px]">
      <Task
        label="Intel(R) PR..."
        width="w-[103px] ml-[6px]"
        icon={
          <Icon className="h-[30px] w-[25px]">
            <rect width="26" height="30" fill="#fff" />
            <ellipse cx="13" cy="15" rx="12" ry="14.500" fill="#1d5fae" />
            <path d="M4 12Q13 2 22 12M7 16Q13 9 19 16M10 19Q13 16 16 19" stroke="#c8ecfd" strokeWidth="2.200" />
            <circle cx="13" cy="24" r="2" fill="#fff" />
          </Icon>
        }
      />
      <Task label="AIM" width="w-[30px]" icon={<Badge label="AIM" className="h-[24px] w-[25px]" />} />
      <Task label="IM with mo..." width="w-[101px]" icon={<Badge label="IM" className="h-[24px] w-[25px]" />} />
      <Task active menu count="8" label="Interne..." width="w-[76px]" icon={<IeLogo className="h-[31px] w-[25px] ml-[2px]" />} />
      <Task menu count="21" countWidth="w-[20px]" label="Micros..." width="w-[66px]" icon={<Clock className="h-[31px] w-[25px]" />} />
      <Task
        menu
        count="3"
        label="Firefox"
        width="w-[55px]"
        icon={
          <Icon className="h-[30px] w-[25px]">
            <ellipse cx="14" cy="14" rx="11" ry="13" fill="#245fa8" />
            <ellipse cx="16" cy="9" rx="6" ry="6" fill="#58a9d6" />
            <path d="M2 3C0 14 0 29 13 29C24 29 27 19 24 9C23 20 18 24 12 21C8 18 9 15 14 15C12 11 8 12 6 8Z" fill="#f07318" />
            <path d="M24 9C25 22 18 29 9 25C18 27 23 20 22 5Z" fill="#fbc632" />
          </Icon>
        }
      />
      <Task
        label="Volume Co..."
        width="w-[98px] ml-[5px]"
        icon={
          <Icon className="h-[30px] w-[26px]">
            <path d="M2 1H22V28H2Z" fill="#b9bcca" stroke="#3f4252" strokeWidth="2" />
            <path d="M9 4V25M16 4V25" stroke="#5b5f78" strokeWidth="2" />
            <path d="M12 7H20V12H12ZM4 18H7M4 14H7M4 10H7" fill="#6a6ea6" stroke="#4a4d68" />
          </Icon>
        }
      />
      <Task
        menu
        count="5"
        label="Microso..."
        width="w-[76px]"
        icon={
          <Icon className="h-[30px] w-[26px]">
            <rect x="1" y="1" width="24" height="28" fill="#fdeee6" stroke="#c94f26" strokeWidth="3" />
            <path d="M6 7H20" stroke="#c94f26" strokeWidth="2.500" />
            <ellipse cx="12" cy="18" rx="5.500" ry="6.500" stroke="#b8431c" strokeWidth="3" />
            <path d="M12 18V12H18V18Z" fill="#e77b4a" />
            <path d="M20 13H22M20 18H22M20 23H22" stroke="#b8431c" strokeWidth="2" />
          </Icon>
        }
      />
    </div>
    <div className="ml-[13px] flex flex-1 items-center bg-[linear-gradient(#0c5cb8,#1cb4f4_3px,#16a0ee_9px,#0f8fe8_20px,#1195ec_45px,#0c6fd0_57px)] pt-[2px] shadow-[inset_2px_0_1px_#0d3a8c]">
      <Icon className="-ml-[14px] h-[35px] w-[29px]">
        <ellipse cx="13" cy="15" rx="12" ry="14" fill="#2b8eea" stroke="#b7d8f7" strokeWidth="1.500" />
        <ellipse cx="11" cy="9" rx="7" ry="5" fill="#74bdf7" opacity=".6" />
        <path d="M16 9L10 15L16 21" stroke="#fff" strokeWidth="3" />
      </Icon>
      <Icon className="ml-[4px] h-[22px] w-[20px]">
        <rect x="1" y="1" width="24" height="28" fill="#f9dd8e" stroke="#c69a38" />
        <path d="M1 2L13 17L25 2M1 28L9 14M25 28L17 14" stroke="#a67c25" strokeWidth="2" />
      </Icon>
      <Clock className="ml-[7px] h-[30px] w-[25px]" />
      <Icon className="ml-[3px] h-[30px] w-[25px]">
        <ellipse cx="13" cy="15" rx="12.500" ry="14.500" fill="#efae28" />
        <ellipse cx="13" cy="15" rx="8" ry="10" stroke="#141414" strokeWidth="2.500" />
        <ellipse cx="13" cy="15" rx="3.500" ry="10" stroke="#141414" strokeWidth="2" />
        <path d="M5 15H21M6 10H20M6 20H20" stroke="#141414" strokeWidth="2" />
      </Icon>
      <Icon className="ml-[4px] h-[30px] w-[26px]">
        <ellipse cx="12" cy="14" rx="11.500" ry="13.500" fill="#f4ba24" />
        <path d="M4 16L10 5V13L15 5L14 15L9 17V22Z" fill="#463a10" />
        <ellipse cx="18" cy="21" rx="7.500" ry="8" fill="#56ad4e" stroke="#e9f6e4" />
        <path d="M14 21L17 25L22 17" stroke="#fff" strokeWidth="2.500" />
      </Icon>
      <Icon className="ml-[4px] h-[30px] w-[25px]">
        <ellipse cx="10" cy="12" rx="8" ry="11" fill="#777d88" stroke="#2f333b" />
        <ellipse cx="9" cy="12" rx="4.500" ry="7" fill="#b9bec8" stroke="#4a4f59" />
        <path d="M14 29L19 20M19 29L24 19" stroke="#7ba7f5" strokeWidth="2" />
      </Icon>
      <Badge label="AIM" className="ml-[3px] h-[24px] w-[25px]" />
      <Icon className="ml-[3px] h-[30px] w-[26px]">
        <path d="M2 1L5 12V19L14 24" stroke="#161616" strokeWidth="4" />
        <path d="M3 2L6 14" stroke="#e0e0e0" strokeWidth="1.500" />
        <path d="M5 14L17 18L15 24L6 21Z" fill="#d5d5d8" stroke="#222" />
        <path d="M15 23L20 20L25 26L19 29Z" fill="#e3d52e" stroke="#26260c" strokeWidth="1.500" />
      </Icon>
      <Swirl className="ml-[3px] h-[30px] w-[25px]" />
      <Icon className="ml-[4px] h-[30px] w-[25px]">
        <rect x="1" y="1" width="24" height="19" fill="#8c8a8e" stroke="#4c4a50" strokeWidth="2" />
        <ellipse cx="7" cy="26" rx="4" ry="3.500" fill="#a5a5aa" stroke="#222" />
        <ellipse cx="18" cy="26" rx="4" ry="3.500" fill="#a5a5aa" stroke="#222" />
      </Icon>
      <Icon className="ml-[3px] h-[30px] w-[26px]">
        <path d="M13 1C20 1 25 4 26 8L18 22L17 29H9L8 22L0 8C1 4 6 1 13 1Z" fill="#146b14" />
        <path d="M3 8Q13 -1 23 8M6 13Q13 6 20 13M9 18Q13 13 17 18M13 21V28" stroke="#4ff04a" strokeWidth="3.400" />
      </Icon>
      <Icon className="ml-[3px] h-[30px] w-[25px]">
        <path d="M3 4L13 1L24 4C25 15 22 24 13 29C6 25 2 17 3 4Z" fill="#3d434c" stroke="#15181c" strokeWidth="1.500" />
        <path d="M6 6L13 4L12 14L6 13Z" fill="#8a929e" />
        <path d="M2 19L9 22L8 29L3 27Z" fill="#eee" stroke="#222" />
      </Icon>
      <Fit className="ml-[17px] w-[62px]">4:53 PM</Fit>
    </div>
  </footer>
);

export default function App() {
  return (
    <div className="h-[1535px] w-[2048px] overflow-hidden bg-[#ece9d8] font-['DejaVu_Sans_Condensed','DejaVu_Sans',sans-serif] text-black">
      <TitleBar />
      <div className="h-[220px] bg-[linear-gradient(100deg,#f3f7fa_0%,#f3f2ee_35%,#efeadf_65%,#ece9d8_100%)]">
        <AddressBar />
        <MenuBar />
        <GoogleBar />
        <CommandBar />
      </div>
      <div className="h-[10px] border-b-[3px] border-[#74746c] bg-[#c0cbfa]" />
      <main className="flex h-[1152px] border-l-2 border-[#b9b9b0] bg-[#fdfdfd] pr-[5px]">
        <div className="ml-[102px] h-[1152px] w-[1269px] shrink-0 overflow-hidden">
          <Details />
          <Heading><Fit className="w-[151px]">Batches: 3</Fit></Heading>
          <BatchesTable />
          <Heading className="mt-[55px]"><Fit className="w-[126px]">Plates: 0</Fit></Heading>
          <Heading className="mt-[54px]"><Fit className="w-[155px]">Assays: 12</Fit></Heading>
          <AssaysTable />
        </div>
        <Structure />
        <ScrollBar />
      </main>
      <div className="h-[4px] border-t-2 border-b-2 border-t-white border-b-[#96948c]" />
      <StatusBar />
      <TaskBar />
    </div>
  );
}
